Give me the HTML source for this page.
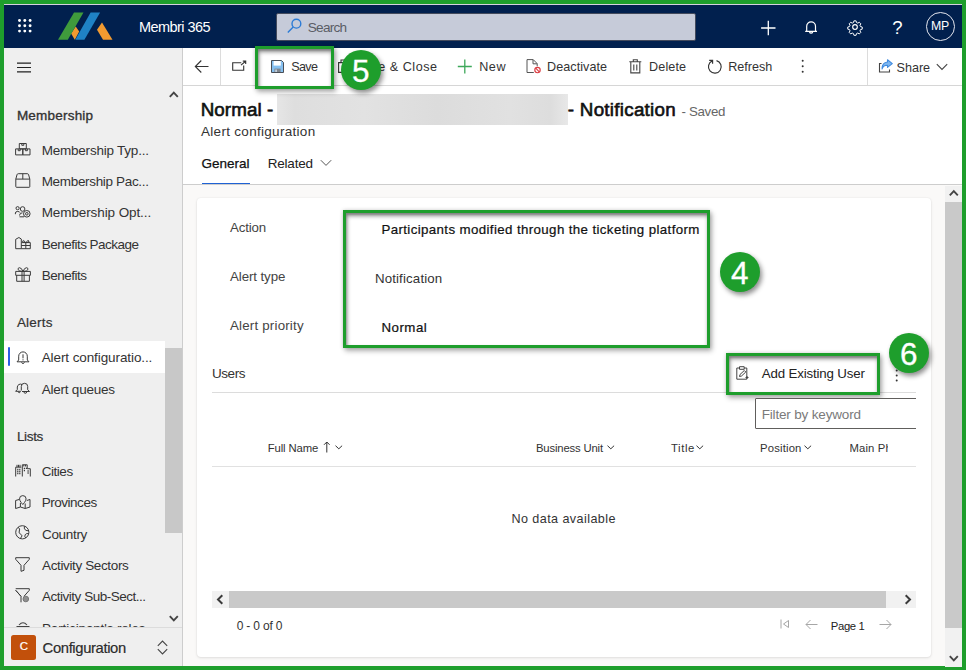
<!DOCTYPE html>
<html><head><meta charset="utf-8"><title>Membri 365</title>
<style>
*{box-sizing:border-box;margin:0;padding:0}
html,body{width:966px;height:670px;overflow:hidden;background:#1e9e2c;font-family:"Liberation Sans",sans-serif;color:#333}
div,span,svg{position:absolute}
.t{white-space:nowrap;line-height:1}
svg{overflow:visible}
.gbox{border:3px solid #1e9e2c;box-shadow:2px 3px 5px rgba(0,0,0,.3),0 0 4px rgba(0,0,0,.16),inset 1px 3px 4px rgba(0,0,0,.42),inset 1px 2px 2px rgba(0,0,0,.18)}
.gc{width:40px;height:40px;border-radius:50%;background:#1e9e2c;box-shadow:2px 3px 5px rgba(0,0,0,.45)}
.gc span{left:-.3px;width:40px;text-align:center;color:#fff;font-size:31.500px;line-height:40px;top:.6px;-webkit-text-stroke:.3px #fff}
.s{fill:none;stroke:#3b3b3b;stroke-width:1}
</style></head><body>

<div style="left:4px;top:4px;width:958px;height:662px;background:#fff"></div>
<div style="left:4px;top:4px;width:958px;height:43.500px;background:#01204e;border-top:1px solid #d6d0de"></div>
<svg style="left:18.200px;top:18.800px" width="14" height="14" fill="#fff"><circle cx="1.500" cy="1.500" r="1.450"/><circle cx="6.800" cy="1.500" r="1.450"/><circle cx="12.100" cy="1.500" r="1.450"/><circle cx="1.500" cy="6.800" r="1.450"/><circle cx="6.800" cy="6.800" r="1.450"/><circle cx="12.100" cy="6.800" r="1.450"/><circle cx="1.500" cy="12.100" r="1.450"/><circle cx="6.800" cy="12.100" r="1.450"/><circle cx="12.100" cy="12.100" r="1.450"/></svg>
<svg style="left:0;top:0" width="130" height="48"><polygon points="71.1,33.6 75.7,26.4 79.2,31.5 74.8,39.8" fill="#f29a30"/><polygon points="74,12.6 83.5,12.6 67.8,39.8 58,39.8" fill="#3f9b3c"/><polygon points="90.6,12.6 100.1,12.6 84.4,39.8 75.3,39.8" fill="#1f82c5"/><polygon points="102,22.4 112.5,39.8 103,39.8 97,29.8" fill="#f29a30"/></svg>
<span class="t" id="t0" style="left:138.9px;top:19.73px;font-size:14.5px;color:#fff;letter-spacing:-0.545px;">Membri 365</span>
<div style="left:276px;top:12.500px;width:419.500px;height:28px;background:#c6cbd9;border:1px solid #434a5c;border-radius:2px"></div>
<svg style="left:286px;top:16.500px" width="16" height="16" fill="none" stroke="#2b7bd6" stroke-width="1.4"><circle cx="10.4" cy="6.7" r="4.4"/><path d="M7.2 10 L1.8 15.4"/></svg>
<span class="t" id="t1" style="left:307.8px;top:21.19px;font-size:13.6px;color:#5a5d66;letter-spacing:-0.758px;">Search</span>
<svg style="left:760px;top:20px" width="16" height="16" stroke="#fff" stroke-width="1.3"><path d="M8.3 0.8V15.2M1.1 8H15.5"/></svg>
<svg style="left:803px;top:19px" width="16" height="17" fill="none" stroke="#fff" stroke-width="1.200"><path d="M3.700 12.300V7.300a4.400 4.400 0 0 1 8.800 0v5M2.200 12.400H14M6.500 13a1.700 1.700 0 0 0 3.200 0" transform="translate(0,0)"/></svg>
<svg style="left:846.500px;top:19.100px" width="16" height="16" viewBox="-8 -8 16 16" fill="none" stroke="#fff" stroke-width="1.2"><circle r="2.300"/><path d="M-1.3 -7.4h2.6l.5 2 1.5.7 1.9-1 1.8 1.8-1 1.9.7 1.5 2 .5v2.6l-2 .5-.7 1.5 1 1.9-1.8 1.8-1.9-1-1.5.7-.5 2h-2.6l-.5-2-1.500-.7-1.9 1-1.8-1.800 1-1.9-.7-1.5-2-.5v-2.600l2-.5.7-1.5-1-1.900 1.800-1.800 1.900 1 1.500-.7z" stroke-linejoin="round" transform="scale(.83)"/></svg>
<span class="t" id="t2" style="left:892.3px;top:19.24px;font-size:18.5px;color:#fff;">?</span>
<div style="left:926px;top:11.700px;width:29px;height:29px;border:1.300px solid #e4e6ee;border-radius:50%"></div>
<span class="t" id="t3" style="left:930.9px;top:20.49px;font-size:12.3px;color:#fff;letter-spacing:-0.069px;">MP</span>
<div style="left:4px;top:48px;width:179px;height:618px;background:#efefef;border-right:1px solid #cdcdcd"></div>
<svg style="left:169px;top:90px" width="10" height="8" fill="none" stroke="#444" stroke-width="1.900"><path d="M0.800 6.800L4.800 2.600L8.800 6.800"/></svg>
<svg style="left:169px;top:615px" width="10" height="8" fill="none" stroke="#444" stroke-width="1.900"><path d="M0.800 1.200L4.800 5.400L8.800 1.200"/></svg>
<div style="left:165px;top:348px;width:17px;height:185px;background:#c8c8c8"></div>
<div style="left:4px;top:341px;width:161px;height:32px;background:#fff"></div>
<div style="left:8px;top:347px;width:2.200px;height:19px;background:#2a5fe6;border-radius:1px"></div>
<span class="t" id="t11" style="left:16.9px;top:108.57px;font-size:13.5px;color:#333;-webkit-text-stroke:0.35px #333;letter-spacing:0.211px;">Membership</span><span class="t" id="t12" style="left:16.9px;top:315.97px;font-size:13.5px;color:#333;-webkit-text-stroke:0.2px #333;letter-spacing:0.213px;">Alerts</span><span class="t" id="t13" style="left:16.9px;top:429.97px;font-size:13.5px;color:#333;-webkit-text-stroke:0.2px #333;letter-spacing:-0.321px;">Lists</span>
<span class="t" id="t14" style="left:41.7px;top:143.57px;font-size:13.5px;color:#333;letter-spacing:-0.220px;">Membership Typ...</span><span class="t" id="t15" style="left:41.7px;top:174.57px;font-size:13.5px;color:#333;letter-spacing:-0.329px;">Membership Pac...</span><span class="t" id="t16" style="left:41.7px;top:205.57px;font-size:13.5px;color:#333;letter-spacing:-0.098px;">Membership Opt...</span><span class="t" id="t17" style="left:41.7px;top:238.07px;font-size:13.5px;color:#333;letter-spacing:-0.513px;">Benefits Package</span><span class="t" id="t18" style="left:41.7px;top:269.27px;font-size:13.5px;color:#333;letter-spacing:-0.486px;">Benefits</span>
<span class="t" id="t19" style="left:41.7px;top:351.07px;font-size:13.5px;color:#333;letter-spacing:-0.094px;">Alert configuratio...</span><span class="t" id="t20" style="left:41.7px;top:382.77px;font-size:13.5px;color:#333;letter-spacing:-0.221px;">Alert queues</span>
<span class="t" id="t21" style="left:41.7px;top:465.07px;font-size:13.5px;color:#333;letter-spacing:-0.457px;">Cities</span><span class="t" id="t22" style="left:41.7px;top:496.17px;font-size:13.5px;color:#333;letter-spacing:-0.475px;">Provinces</span><span class="t" id="t23" style="left:42.0px;top:527.97px;font-size:13.5px;color:#333;letter-spacing:-0.317px;">Country</span><span class="t" id="t24" style="left:42.0px;top:559.27px;font-size:13.5px;color:#333;letter-spacing:-0.367px;">Activity Sectors</span><span class="t" id="t25" style="left:42.0px;top:590.17px;font-size:13.5px;color:#333;letter-spacing:-0.485px;">Activity Sub-Sect...</span>
<div style="left:4px;top:600px;width:161px;height:27px;overflow:hidden"><span class="t" id="t26" style="left:38.0px;top:21.57px;font-size:13.5px;color:#333;letter-spacing:-0.141px;">Participant's roles</span><svg style="left:11px;top:21px" width="16" height="8" fill="none" stroke="#444" stroke-width="1.100"><path d="M4 4Q8 -0.500 12 4M1.500 5.500H14.500"/></svg></div>
<div style="left:4px;top:627px;width:178px;height:1px;background:#dcdcdc"></div>
<div style="left:11px;top:635px;width:25px;height:25px;background:#c2500b;border-radius:2.500px"></div>
<span class="t" id="t27" style="left:19.8px;top:640.57px;font-size:11.5px;color:#fff;-webkit-text-stroke:0.2px #fff;">C</span><span class="t" id="t28" style="left:42.6px;top:641.17px;font-size:14.8px;color:#2b2b2b;-webkit-text-stroke:0.18px #2b2b2b;letter-spacing:-0.369px;">Configuration</span>
<svg style="left:157px;top:640px" width="11" height="15" fill="none" stroke="#444" stroke-width="1.100"><path d="M0.800 5.800L5.500 1.100L10.200 5.800M0.800 9.200L5.500 13.900L10.200 9.200"/></svg>
<!-- sidebar icons -->
<svg style="left:14.500px;top:143px" width="16" height="13" class="s"><path d="M0.600 5.900H7.800V11.900H0.600zM7.800 5.900H15V11.900H7.800zM4.300 0.500H11.300V5.900H4.300zM3.200 5.900V7.700H5.200V5.900M10.400 5.900V7.700H12.400V5.900M6.800 0.500V2.300H8.800V0.500"/></svg>
<svg style="left:14.500px;top:173px" width="16" height="15" class="s"><path d="M0.800 6.100V13.600Q0.800 14.300 1.500 14.300H14.100Q14.800 14.300 14.800 13.600V6.100M0.800 6.100H14.800M7.800 0.700V6.100M0.800 6.100L2 1.700Q2.300 0.700 3.300 0.700H12.300Q13.300 0.700 13.600 1.700L14.800 6.100"/></svg>
<svg style="left:14.500px;top:206px" width="16" height="12" class="s"><circle cx="2.600" cy="2.200" r="1.600"/><path d="M0.400 8.200V7Q0.400 5.500 2.600 5.500T4.800 6.500M4.500 10.800H9"/><circle cx="7.600" cy="3" r="2.300"/><path d="M4.500 9.500Q4.500 6.800 7.500 6.800"/><circle cx="11.800" cy="7.800" r="3.300"/><circle cx="11.800" cy="7.800" r="1.300"/></svg>
<svg style="left:14.500px;top:237px" width="16" height="13" class="s"><path d="M6.300 11.700H0.700V2.300L3.900 0.500L6.300 2V5.600M6.300 5.600H15.300V11.700H6.300zM6.300 8.500H15.300M10.800 5.600V11.700M10.800 5.600Q8.200 2.300 7.600 4T10.800 5.600Q13.400 2.300 14 4T10.800 5.600"/></svg>
<svg style="left:14.500px;top:267px" width="16" height="15" class="s"><path d="M0.700 4.400H15.400V8.300H0.700zM1.700 8.300V14.300H14.400V8.300M7 4.400V14.300M9.100 4.400V14.300M8 4.400Q6.500 0.500 4.300 0.700Q2.500 1 3.200 2.800Q4 4.400 8 4.400Q12 4.400 12.800 2.800Q13.500 1 11.700 0.700Q9.500 0.500 8 4.400"/></svg>
<svg style="left:15.500px;top:349.500px" width="14" height="15" class="s"><path d="M2.700 10V6.200a4.300 4.300 0 0 1 8.600 0V10L13 11.800H1zM5.500 12.400a1.600 1.600 0 0 0 3 0M7 4.300V8.300M7 9.300V10.400"/></svg>
<svg style="left:14.500px;top:382px" width="16" height="12" class="s" stroke-width=".9"><path d="M6.300 8.500V4.500a3.200 3.200 0 0 1 6.400 0V7.800L14.500 9.500H7M9 10a1.300 1.300 0 0 0 2.600 0M7 2.500A3.200 3.200 0 0 0 2.300 5V7.500L0.600 9.300H5.800M3 9.500a1.300 1.300 0 0 0 2.400 .5"/></svg>
<svg style="left:14.500px;top:464px" width="16" height="13" class="s" stroke-width=".9"><path d="M0.700 12.500V3.200H6.300M2 3V0.800M3.500 3V0.800M5 3V0.800M7.300 12.500V0.800H12.200V4.700H15.300V12.500M8.800 0.800V2.500M10.500 0.800V2.500"/><path d="M2.200 5.500H3.400M4.200 5.500H5.400M2.200 7.500H3.400M4.200 7.500H5.400M2.200 9.500H3.400M4.200 9.500H5.400M8.800 4.300H10M10.800 4.300H12M8.800 6.500H10M12.500 7H13.700M12.500 9H13.700" stroke-width="1.300"/></svg>
<svg style="left:14.500px;top:495px" width="16" height="14" class="s"><path d="M0.600 5.500L4 4.500M0.600 5.500V13.500L5.400 12L10.200 13.500L15 12V4.500L11.800 5.500M5.400 8V12M10.200 8.500V13.500"/><path d="M7.800 0.600A3.300 3.300 0 0 1 11.100 3.900C11.100 6 7.800 9.500 7.800 9.500S4.500 6 4.500 3.900A3.300 3.300 0 0 1 7.800 0.600z"/></svg>
<svg style="left:15px;top:525.200px" width="15" height="15" class="s"><circle cx="7.300" cy="7.300" r="6.600"/><path d="M3.200 2.200Q5.500 4 4.300 6T5.800 9.200T5.400 13.500M9.700 1.200Q8.500 3.300 10.200 4.800T13.700 5.500M13.800 8.700Q11.300 8 10.200 9.700T10.700 13"/></svg>
<svg style="left:15px;top:557px" width="15" height="15" class="s" stroke-width="1.100"><path d="M0.700 0.700H14.300V2.300L9 8.300V13.300L6 14.300V8.300L0.700 2.300z" stroke-linejoin="round"/></svg>
<svg style="left:15px;top:588px" width="16" height="15" class="s" stroke-width="1.100"><path d="M0.700 0.700H14.300V2.300L9 8.300M6 8.300V14.300M6 8.300L0.700 2.300z" stroke-linejoin="round"/><circle cx="10.800" cy="11" r="2.800" fill="#909090" stroke="#777"/></svg>

<div style="left:202px;top:182.700px;width:48px;height:1.600px;background:#1f62d4"></div>
<div style="left:183px;top:184px;width:779px;height:1px;background:#cdcdcd"></div>
<div style="left:183px;top:185px;width:779px;height:481px;background:#faf9f8"></div>
<span class="t" id="t29" style="left:200.7px;top:100.69px;font-size:18.8px;color:#111;-webkit-text-stroke:0.62px #111;letter-spacing:0.072px;">Normal -</span>
<div style="left:277px;top:94px;width:291px;height:30.500px;background:linear-gradient(90deg,#e6e6e6,#dedede 6%,#e2e2e2 30%,#dcdcdc 55%,#e1e1e1 80%,#dddddd 94%,#e8e8e8)"></div>
<span class="t" id="t30" style="left:567.8px;top:100.69px;font-size:18.8px;color:#111;-webkit-text-stroke:0.62px #111;letter-spacing:0.270px;">- Notification</span><span class="t" id="t31" style="left:681.5px;top:105.34px;font-size:13.3px;color:#666;letter-spacing:-0.327px;">- Saved</span><span class="t" id="t32" style="left:201.0px;top:124.57px;font-size:13.5px;color:#333;letter-spacing:0.298px;">Alert configuration</span>
<span class="t" id="t33" style="left:201.5px;top:157.17px;font-size:13.5px;color:#111;-webkit-text-stroke:0.25px #111;letter-spacing:0.008px;">General</span><span class="t" id="t34" style="left:267.7px;top:157.17px;font-size:13.5px;color:#222;letter-spacing:-0.194px;">Related</span>
<svg style="left:320px;top:159.300px" width="12" height="8" fill="none" stroke="#555" stroke-width="1"><path d="M0.800 1.200L6 6.400L11.200 1.200"/></svg>
<!-- card -->
<div style="left:197px;top:198px;width:734px;height:459px;background:#fff;border-radius:4px;box-shadow:0 1px 3px rgba(0,0,0,.10),0 0 2px rgba(0,0,0,.07)"></div>
<span class="t" id="t35" style="left:230.0px;top:220.54px;font-size:13.3px;color:#444;letter-spacing:-0.141px;">Action</span><span class="t" id="t36" style="left:230.0px;top:269.74px;font-size:13.3px;color:#444;letter-spacing:-0.090px;">Alert type</span><span class="t" id="t37" style="left:230.0px;top:318.74px;font-size:13.3px;color:#444;letter-spacing:0.202px;">Alert priority</span>
<div class="gbox" style="left:343px;top:210px;width:367px;height:138px;background:#fff"></div>
<span class="t" id="t38" style="left:381.4px;top:222.54px;font-size:13.3px;color:#111;-webkit-text-stroke:0.22px #111;letter-spacing:0.381px;">Participants modified through the ticketing platform</span><span class="t" id="t39" style="left:374.9px;top:272.34px;font-size:13.3px;color:#333;letter-spacing:0.144px;">Notification</span><span class="t" id="t40" style="left:381.4px;top:320.74px;font-size:13.3px;color:#111;-webkit-text-stroke:0.22px #111;letter-spacing:0.501px;">Normal</span>
<div class="gc" style="left:720px;top:252px"><span>4</span></div>
<span class="t" id="t41" style="left:211.9px;top:366.77px;font-size:13.5px;color:#333;letter-spacing:-0.396px;">Users</span>
<div style="left:212px;top:392px;width:704px;height:1px;background:#dcdcdc"></div>
<svg style="left:894.500px;top:368px" width="4" height="15" fill="#333"><circle cx="1.700" cy="2.600" r="1"/><circle cx="1.700" cy="7.500" r="1"/><circle cx="1.700" cy="12.400" r="1"/></svg>
<div class="gbox" style="left:726px;top:353px;width:154px;height:41.500px;background:#fff"></div>
<svg style="left:736px;top:366px" width="13" height="14" fill="none" stroke="#444" stroke-width="1"><path d="M3.500 2H0.800V13.200H10.800V2H8.200M3.500 0.700H8.200V3.300H3.500zM3.500 10.500L4 8.500L8.300 4.500L9.800 6L5.500 10zM9.500 11.500H12.500M11 10V13"/></svg>
<span class="t" id="t42" style="left:761.7px;top:366.74px;font-size:13.3px;color:#222;letter-spacing:-0.151px;">Add Existing User</span>
<div class="gc" style="left:889px;top:333px"><span>6</span></div>
<div style="left:755px;top:398px;width:161px;height:30.500px;overflow:hidden"><div style="left:0;top:0;width:170px;height:30.500px;border:1px solid #605e5c;border-radius:1px;background:#fff"></div></div>
<span class="t" id="t43" style="left:761.7px;top:407.97px;font-size:13.5px;color:#7a7a7a;letter-spacing:-0.172px;">Filter by keyword</span>
<span class="t" id="t44" style="left:267.7px;top:442.73px;font-size:11.3px;color:#333;letter-spacing:-0.098px;">Full Name</span><span class="t" id="t45" style="left:536.0px;top:442.73px;font-size:11.3px;color:#333;letter-spacing:-0.165px;">Business Unit</span><span class="t" id="t46" style="left:670.9px;top:442.73px;font-size:11.3px;color:#333;letter-spacing:0.642px;">Title</span><span class="t" id="t47" style="left:760.0px;top:442.73px;font-size:11.3px;color:#333;letter-spacing:0.172px;">Position</span>
<div style="left:850px;top:438px;width:38px;height:20px;overflow:hidden"><span class="t" id="t48" style="left:-0.5px;top:4.73px;font-size:11.3px;color:#333;letter-spacing:0.123px;">Main Phone</span></div>
<svg style="left:323px;top:441px" width="8" height="12" fill="none" stroke="#333" stroke-width="1"><path d="M3.800 11.500V1M1 3.800L3.800 1L6.600 3.800"/></svg>
<svg style="left:334.500px;top:445px" width="8" height="5" fill="none" stroke="#333" stroke-width="1"><path d="M0.500 0.700L3.800 3.800L7.100 0.700"/></svg>
<svg style="left:606.500px;top:445px" width="8" height="5" fill="none" stroke="#333" stroke-width="1"><path d="M0.500 0.700L3.800 3.800L7.100 0.700"/></svg>
<svg style="left:696px;top:445px" width="8" height="5" fill="none" stroke="#333" stroke-width="1"><path d="M0.500 0.700L3.800 3.800L7.100 0.700"/></svg>
<svg style="left:803.500px;top:445px" width="8" height="5" fill="none" stroke="#333" stroke-width="1"><path d="M0.500 0.700L3.800 3.800L7.100 0.700"/></svg>
<div style="left:212px;top:466px;width:704px;height:1px;background:#e1e1e1"></div>
<span class="t" id="t49" style="left:511.5px;top:513.33px;font-size:12.6px;color:#333;letter-spacing:0.417px;">No data available</span>
<div style="left:212px;top:591px;width:704px;height:17px;background:#f1f1f1"></div>
<div style="left:229px;top:591px;width:657px;height:17px;background:#c9c9c9"></div>
<svg style="left:216px;top:594px" width="8" height="11" fill="none" stroke="#3a3a3a" stroke-width="2"><path d="M6.300 1.200L2 5.500L6.300 9.800"/></svg>
<svg style="left:904px;top:594px" width="8" height="11" fill="none" stroke="#3a3a3a" stroke-width="2"><path d="M1.700 1.200L6 5.500L1.700 9.800"/></svg>
<span class="t" id="t50" style="left:236.7px;top:620.24px;font-size:12px;color:#333;letter-spacing:-0.179px;">0 - 0 of 0</span><span class="t" id="t51" style="left:830.8px;top:620.93px;font-size:11.3px;color:#222;letter-spacing:-0.362px;">Page 1</span>
<svg style="left:780px;top:619px" width="10" height="10" fill="none" stroke="#a6a6a6" stroke-width="1"><path d="M1 0.500V9.500M8.500 1.500V8.500L3.500 5z"/></svg>
<svg style="left:805px;top:619px" width="13" height="11" fill="none" stroke="#a6a6a6" stroke-width="1"><path d="M12.500 5.500H1M5.500 1L1 5.500L5.500 10"/></svg>
<svg style="left:879px;top:619px" width="13" height="11" fill="none" stroke="#a6a6a6" stroke-width="1"><path d="M0.500 5.500H12M7.500 1L12 5.500L7.500 10"/></svg>
<!-- vertical scrollbar -->
<div style="left:945px;top:185.500px;width:17px;height:481px;background:#f1f1f1"></div>
<div style="left:945px;top:202px;width:17px;height:426px;background:#c9c9c9"></div>
<svg style="left:948.500px;top:189px" width="10" height="8" fill="none" stroke="#444" stroke-width="1.900"><path d="M0.800 6.300L4.800 2.100L8.800 6.300"/></svg>
<svg style="left:948.500px;top:655px" width="10" height="8" fill="none" stroke="#444" stroke-width="1.900"><path d="M0.800 1.200L4.800 5.400L8.800 1.200"/></svg>

<div style="left:183px;top:85px;width:779px;height:1px;background:#d6d6d6"></div>
<svg style="left:17px;top:61px" width="15" height="13" stroke="#222" stroke-width="1.2"><path d="M0 2.100H14M0 6.500H14M0 10.900H14"/></svg>
<svg style="left:194px;top:59px" width="16" height="15" fill="none" stroke="#333" stroke-width="1.100"><path d="M14.5 7.5H1.5M7.300 1.500L1.300 7.500l6 6"/></svg>
<div style="left:219.5px;top:48px;width:1px;height:37px;background:#dcdcdc"></div>
<svg style="left:232px;top:60px" width="15" height="12" fill="none" stroke="#333" stroke-width="1.1"><path d="M9.300 2.700H0.700V10.200H11.700V5.500M9 5.200L13.300 1.500M10.800 1.100H13.700V4"/></svg>
<svg style="left:338px;top:59px" width="16" height="14" fill="none" stroke="#333" stroke-width="1.1"><path d="M0.600 3.600H12.400V13.400H0.600zM3 3.500V1H15v9.500h-2.500"/></svg>
<span class="t" id="t4" style="left:355.1px;top:60.73px;font-size:12.6px;color:#333;letter-spacing:0.509px;">Save &amp; Close</span>
<div class="gbox" style="left:255px;top:46px;width:79px;height:43px;background:#fff"></div>
<svg style="left:271px;top:60px" width="13" height="13"><path d="M0.500 0.500H10.500L12.500 2.500V12.500H0.500z" fill="#86c0f0" stroke="#4a4f57" stroke-width="1"/><rect x="2.600" y="1" width="7.200" height="4.600" fill="#fff"/><rect x="3.400" y="8.600" width="6.200" height="3.400" fill="#7e858e"/><rect x="4.300" y="9.500" width="1.600" height="2.500" fill="#c8d6e4"/></svg>
<span class="t" id="t5" style="left:291.2px;top:60.73px;font-size:12.6px;color:#333;letter-spacing:-0.637px;">Save</span>
<div class="gc" style="left:341px;top:50px"><span>5</span></div>
<svg style="left:457px;top:59px" width="16" height="16" stroke="#3da85a" stroke-width="1.3"><path d="M7.800 0.500V14.500M0.800 7.500H14.800"/></svg>
<span class="t" id="t6" style="left:479.2px;top:60.73px;font-size:12.6px;color:#333;letter-spacing:0.552px;">New</span>
<svg style="left:526px;top:59px" width="16" height="15" fill="none"><path d="M7.800 13.500H1V0.600H7.200L11.200 4.600V7.300M7 0.800V4.800H11" stroke="#555" stroke-width="1"/><circle cx="11.500" cy="11" r="2.700" stroke="#dc3c41" stroke-width="1.150"/><path d="M9.700 9.200L13.300 12.800" stroke="#dc3c41" stroke-width="1.150"/></svg>
<span class="t" id="t7" style="left:547.1px;top:60.73px;font-size:12.6px;color:#333;letter-spacing:0.044px;">Deactivate</span>
<svg style="left:629px;top:59px" width="13" height="15" fill="none" stroke="#444" stroke-width="1.100"><path d="M0.300 2.800H12.300M4.300 2.600V0.800H8.300V2.600M1.800 3V13.900H10.800V3M4.800 5.500V11.500M7.800 5.500V11.500"/></svg>
<span class="t" id="t8" style="left:649.1px;top:60.73px;font-size:12.6px;color:#333;letter-spacing:0.120px;">Delete</span>
<svg style="left:706.5px;top:58.500px" width="16" height="16" fill="none" stroke="#333" stroke-width="1.150"><path d="M5.300 1.900A6.400 6.400 0 1 0 9.500 1.600M5.600 4.700V1.300H2.200"/></svg>
<span class="t" id="t9" style="left:728.2px;top:60.73px;font-size:12.6px;color:#333;letter-spacing:-0.017px;">Refresh</span>
<svg style="left:800.5px;top:59px" width="4" height="15" fill="#333"><circle cx="1.700" cy="1.800" r="1"/><circle cx="1.700" cy="7.300" r="1"/><circle cx="1.700" cy="12.800" r="1"/></svg>
<div style="left:866.900px;top:48px;width:1px;height:37px;background:#dcdcdc"></div>
<svg style="left:878px;top:59px" width="16" height="14" fill="none"><path d="M3.500 4.500H1.500V13H11.500V10.500" stroke="#444" stroke-width="1.100"/><path d="M9.500 0.800L14.300 4.600L9.500 8.400V6.200C6.500 6.200 4.700 7.600 4 10C4 6 6 3.300 9.500 3z" fill="#7db6f0" stroke="#3f8ade" stroke-width="1.100" stroke-linejoin="round"/></svg>
<span class="t" id="t10" style="left:896.5px;top:62.03px;font-size:12.6px;color:#333;">Share</span>
<svg style="left:936px;top:63px" width="12" height="8" fill="none" stroke="#444" stroke-width="1.100"><path d="M0.800 1.200L6 6.400L11.200 1.200"/></svg>

</body></html>
